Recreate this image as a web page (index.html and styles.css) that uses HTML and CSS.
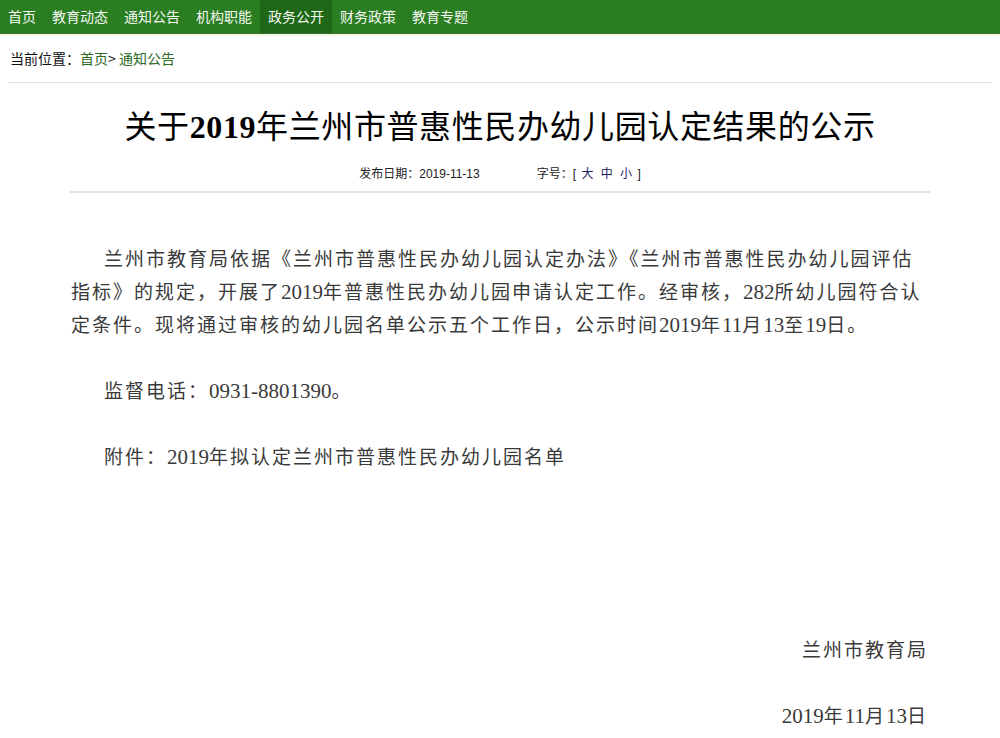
FILE: index.html
```html
<!DOCTYPE html>
<html lang="zh-CN">
<head>
  <meta charset="UTF-8" />
  <meta name="viewport" content="width=device-width, initial-scale=1.0"/>
  <title>关于2019年兰州市普惠性民办幼儿园认定结果的公示</title>
  <link rel="stylesheet" href="styles.css">
</head>
<body>
  <div class="nav">
    <a href="#">首页</a>
    <a href="#">教育动态</a>
    <a href="#">通知公告</a>
    <a href="#">机构职能</a>
    <a href="#" class="on">政务公开</a>
    <a href="#">财务政策</a>
    <a href="#">教育专题</a>
  </div>

  <div class="crumb">
    当前位置：<a href="#">首页</a>&gt; <a href="#">通知公告</a>
  </div>

  <div class="article">
    <h1 class="title">关于<span class="num">2019</span>年兰州市普惠性民办幼儿园认定结果的公示</h1>
    <div class="meta">
      <span>发布日期：<span class="date">2019-11-13</span></span>
      <span>字号：[ <a href="#">大</a> <a href="#">中</a> <a href="#">小</a> ]</span>
    </div>

    <div class="content">
      <p class="indent">兰州市教育局依据《兰州市普惠性民办幼儿园认定办法》《兰州市普惠性民办幼儿园评估指标》的规定，开展了<span class="num">2019</span>年普惠性民办幼儿园申请认定工作。经审核，<span class="num">282</span>所幼儿园符合认定条件。现将通过审核的幼儿园名单公示五个工作日，公示时间<span class="num">2019</span>年<span class="num">11</span>月<span class="num">13</span>至<span class="num">19</span>日。</p>
      <p class="indent">监督电话：<span class="num">0931-8801390</span>。</p>
      <p class="indent">附件：<span class="num">2019</span>年拟认定兰州市普惠性民办幼儿园名单</p>

      <div class="sign">
        <p>兰州市教育局</p>
        <p><span class="num">2019</span>年<span class="num">11</span>月<span class="num">13</span>日</p>
      </div>
    </div>
  </div>
</body>
</html>
```

FILE: styles.css
```css
body {
  margin: 0;
  font-family: "Noto Sans CJK SC", sans-serif;
  background-color: #fff;
  color: #222;
}

a {
  text-decoration: none;
}

/* top menu */
.nav {
  display: flex;
  height: 33px;
  background-color: #2a7d20;
  border-bottom: 1px solid #3b6b2c;
  box-shadow: 0 2px 2px #eef8e4;
}

.nav a {
  padding: 0 8px;
  line-height: 33px;
  font-size: 14px;
  color: #f4f8f2;
}

.nav a.on {
  background-color: #1e6817;
}

/* breadcrumb */
.crumb {
  margin: 0 8px;
  padding: 12px 2px;
  line-height: 24px;
  font-size: 14px;
  color: #111;
  border-bottom: 1px solid #e0e0e0;
}

.crumb a {
  color: #2d6a1f;
}

/* article */
.article {
  margin: 0 70px;
}

.title {
  margin: 22px 0 0;
  line-height: 44px;
  font-family: "Liberation Serif", "Noto Sans CJK SC", serif;
  font-size: 32px;
  font-weight: normal;
  letter-spacing: 0.6px;
  text-align: center;
  color: #000;
}

.title .num {
  font-weight: bold;
}

.meta {
  display: flex;
  justify-content: center;
  gap: 57px;
  margin-top: 15px;
  padding-bottom: 7px;
  line-height: 20px;
  font-family: "Liberation Sans", "Noto Sans CJK SC", sans-serif;
  font-size: 12px;
  color: #222;
  border-bottom: 2px solid #e2e2e2;
}

.meta a {
  margin: 0 2px;
  color: #1c1c5e;
}

.content {
  padding: 50px 2px 0 1px;
  font-family: "Liberation Serif", "Noto Sans CJK SC", serif;
  font-size: 19px;
  letter-spacing: 2px;
  line-height: 33px;
  color: #3a3a3a;
}

.content p {
  margin: 0 0 33px;
}

.content .indent {
  text-indent: 33px;
}

.content .num {
  font-size: 21px;
  letter-spacing: 0;
}

.sign {
  margin-top: 160px;
  text-align: right;
}
```
